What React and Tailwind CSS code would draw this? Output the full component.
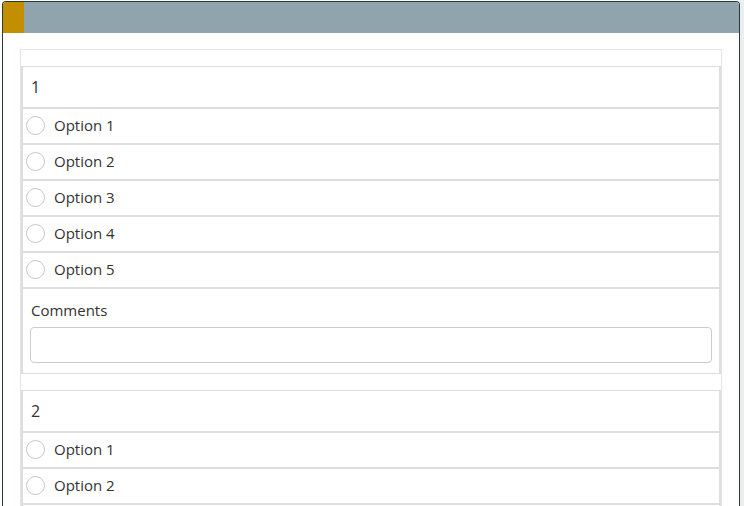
import React from 'react';

const options = ['Option 1', 'Option 2', 'Option 3', 'Option 4', 'Option 5'];

const Question = ({ number }) => (
  <div className="border-x-2 border-t border-b border-[#dedede]">
    <div className="h-[42px] border-b-2 border-[#dedede] pl-[8px] flex items-center text-[16px] text-[#333]">
      {number}
    </div>
    {options.map(opt => (
      <label key={opt} className="h-[36px] border-b-2 border-[#dedede] pl-[3px] pb-[2px] flex items-center gap-[9px] text-[15px] text-[#333]">
        <span className="w-[19px] h-[19px] rounded-full border border-[#c8c8c8] bg-white shrink-0" />
        {opt}
      </label>
    ))}
    <div className="pt-[11px] pb-[10px] pl-[7px] pr-[7px]">
      <div className="h-[20px] leading-[20px] pl-[1px] text-[15px] text-[#333]">Comments</div>
      <input className="mt-[7px] w-full h-[36px] rounded-[4px] border border-[#cccccc] bg-white outline-none" />
    </div>
  </div>
);

export default function App() {
  return (
    <div className="flex bg-white" style={{ fontFamily: '"Open Sans", "Noto Sans", sans-serif' }}>
      <div className="ml-[2px] mt-[1px] w-[738px] border border-b-0 border-[#2a3840] rounded-t-[4px] overflow-hidden bg-white">
        <div className="h-[31px] bg-[#8fa4ac] flex">
          <div className="w-[21px] bg-[#c38e00]" />
        </div>
        <div className="px-[17px] pt-4 pb-4">
          <div className="border border-[#e3e3e3] pt-4 flex flex-col gap-4">
            <Question number="1" />
            <Question number="2" />
          </div>
        </div>
      </div>
      <div className="flex-1 bg-[#eceeee]" />
    </div>
  );
}
